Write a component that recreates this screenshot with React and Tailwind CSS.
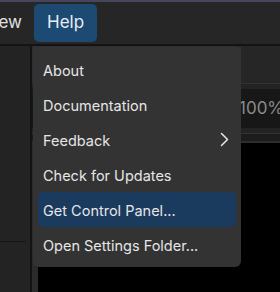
import React from 'react';

const items = [
  { label: 'About' },
  { label: 'Documentation' },
  { label: 'Feedback', sub: true },
  { label: 'Check for Updates' },
  { label: 'Get Control Panel...', active: true },
  { label: 'Open Settings Folder...' },
];

const MenuItem = ({ label, sub, active }) => (
  <div
    className={`h-[35px] flex items-center justify-between pl-[5px] pr-[7px] pt-[2px] rounded-[5px] ${
      active ? 'bg-[#1a3a5e]' : ''
    }`}
  >
    <span className="whitespace-nowrap">{label}</span>
    {sub && (
      <svg width="9" height="15" viewBox="0 0 9 15" fill="none" className="shrink-0 -mt-[2px]">
        <polyline points="1.5,1.5 7.5,7.5 1.5,13.5" stroke="#e8e8e8" strokeWidth="1.5" strokeLinecap="round" strokeLinejoin="round" />
      </svg>
    )}
  </div>
);

export default function App() {
  return (
    <div className="relative w-[280px] h-[292px] overflow-hidden bg-[#262626] font-['Inter',sans-serif] text-[#e6e6e6]">
      {/* menubar */}
      <div className="h-[46px] border-t-2 border-b-2 border-t-[#45455e] border-b-[#141414] bg-[#262626] flex items-center">
        <div className="w-[22px] overflow-hidden flex justify-end">
          <span className="whitespace-nowrap text-[17px] text-[#e0e0e0]">View</span>
        </div>
        <div className="ml-[12px] h-[38px] px-[13px] flex items-center rounded-[5px] bg-[#1c4a73] text-[17px] text-[#e8eef4]">
          Help
        </div>
      </div>

      {/* body */}
      <div className="flex h-[246px]">
        <div className="w-[32px] shrink-0 bg-[#232323] border-r-2 border-[#141414] flex flex-col">
          <div className="h-[195px]" />
          <div className="h-px w-[26px] bg-[#141414]" />
        </div>
        <div className="flex-1 flex flex-col">
          <div className="h-[37px] flex">
            <div className="w-[208px] bg-[#2f2f2f] rounded-tr-[6px]" />
            <div className="flex-1 bg-[#262626]" />
          </div>
          <div className="h-px bg-[#333333]" />
          <div className="h-[5px] bg-[#232323]" />
          <div className="h-[39px] bg-[#171717] flex items-center pl-[207px] text-[17px] text-[#8a8a8a]">
            100%
          </div>
          <div className="h-[5px] bg-[#232323]" />
          <div className="h-px bg-[#333333]" />
          <div className="h-[7px] bg-[#1c1c1c]" />
          <div className="h-[2px] bg-[#2e2e2e]" />
          <div className="flex-1 flex">
            <div className="w-[6px] bg-[#2b2b2b]" />
            <div className="flex-1 bg-black" />
          </div>
        </div>
      </div>

      {/* dropdown */}
      <div className="absolute left-[33px] top-[47px] w-[208px] p-[5px] bg-[#333333] rounded-b-[6px] text-[14.5px]">
        {items.map((it) => (
          <MenuItem key={it.label} {...it} />
        ))}
      </div>
    </div>
  );
}
